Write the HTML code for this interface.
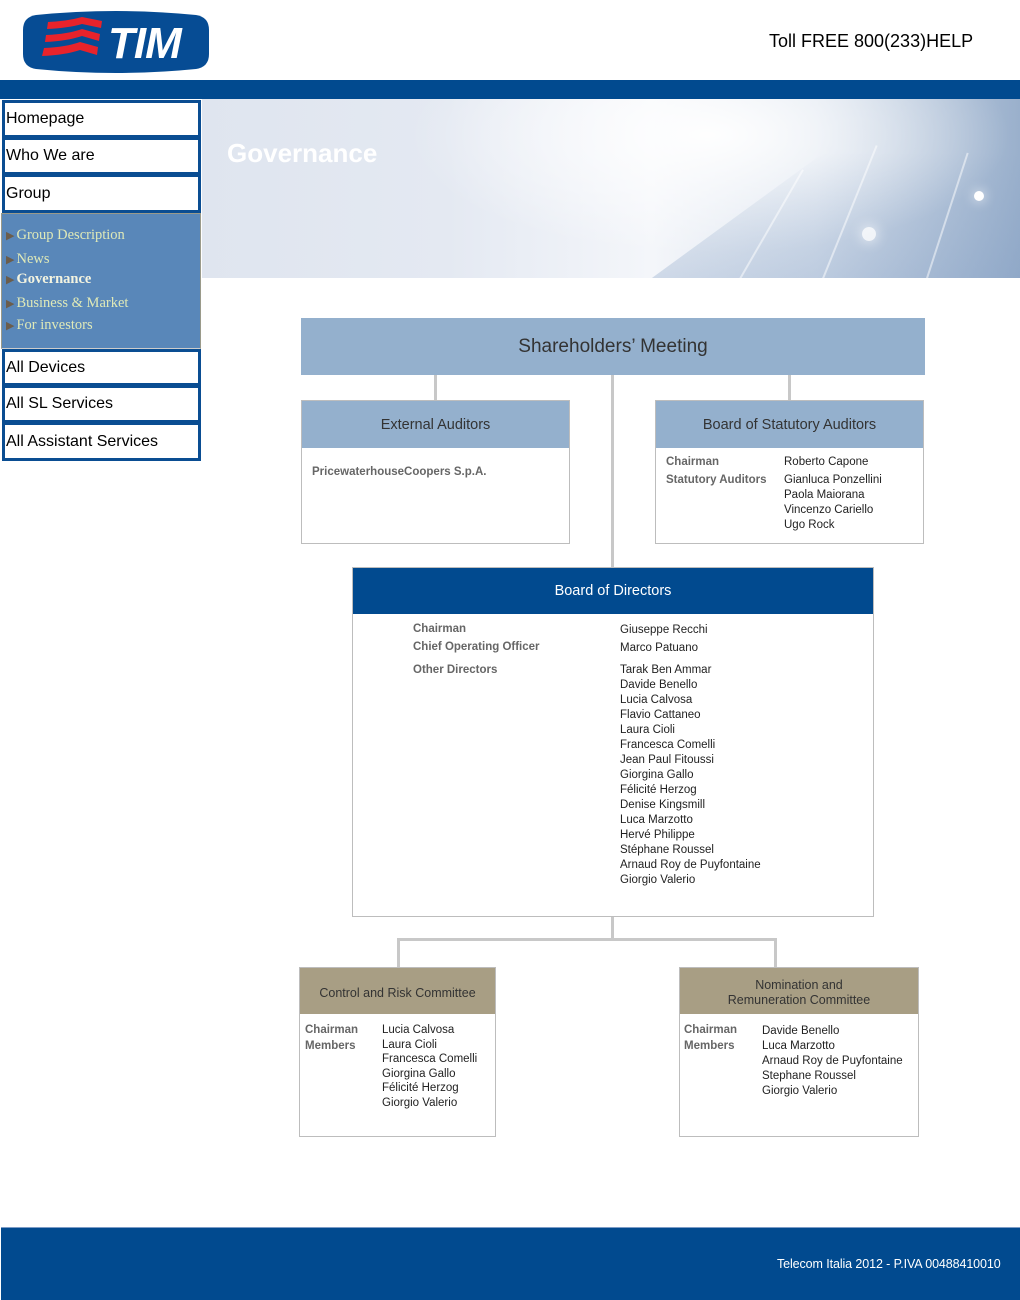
<!DOCTYPE html>
<html><head><meta charset="utf-8"><style>
*{margin:0;padding:0;box-sizing:border-box}
body{width:1020px;height:1300px;position:relative;background:#fff;font-family:"Liberation Sans",Arial,sans-serif;overflow:hidden}
.a{position:absolute}
.btn{position:absolute;left:2px;width:199px;border:3px solid #0a4d92;background:#fff;font-size:16px;color:#000;padding-left:1px;display:flex;align-items:center}
.sub{font-family:"Liberation Serif",serif;font-size:14.5px;color:#dfe9b8;position:absolute;left:6px}
.sub b{color:#6b5d4c;font-size:11px;font-weight:normal;margin-right:2px}
.box{position:absolute;background:#fff;border:1px solid #bdbdbd}
.hd{position:absolute;left:0;right:0;top:0;display:flex;align-items:center;justify-content:center;text-align:center;color:#333;font-size:14.5px}
.ln{position:absolute;background:#c8c8c8}
.lab{position:absolute;color:#666;font-weight:bold;font-size:11.5px;line-height:18px}
.nm{position:absolute;color:#222;font-size:11.5px;line-height:15px}
</style></head><body>
<svg class="a" style="left:22px;top:10px" width="188" height="64" viewBox="0 0 188 64">
<path d="M14 5 Q94 -3 174 5 Q187 7 187 20 L187 44 Q187 57 174 59 Q94 67 14 59 Q1 57 1 44 L1 20 Q1 7 14 5Z" fill="#064c94"/>
<g fill="#e8232b">
<path d="M26 12 Q46 11 60 7 L80 11 L79 18 L60 14 Q46 18 25 19Z"/>
<path d="M24 25 Q46 24 60 19 L78 24 L77 31 L60 26 Q45 31 23 32Z"/>
<path d="M22 38 Q44 37 58 32 L76 37 L75 45 L58 40 Q43 45 20 46Z"/>
</g>
<text x="86" y="48" font-family="Liberation Sans" font-weight="bold" font-style="italic" font-size="44" fill="#fff" letter-spacing="-1">TIM</text>
</svg>
<div class="a" style="left:769px;top:31px;font-size:18px;color:#000">Toll FREE 800(233)HELP</div>
<div class="a" style="left:0;top:80px;width:1020px;height:19px;background:#014a8f"></div>
<div class="a" style="left:202px;top:99px;width:818px;height:179px;overflow:hidden;background:linear-gradient(90deg,#dfe5ef 0%,#e4e9f2 30%,#f4f6fa 55%,#dbe3ee 75%,#9ab0cc 100%)">
<div class="a" style="left:0;top:0;width:818px;height:179px;background:radial-gradient(ellipse 300px 120px at 62% 20%,rgba(255,255,255,.95),rgba(255,255,255,0))"></div>
<div class="a" style="left:0;top:0;width:818px;height:179px;background:linear-gradient(180deg,rgba(255,255,255,0) 30%,rgba(120,150,190,.3) 100%);clip-path:polygon(55% 100%,85% 0,100% 0,100% 100%)"></div>
<div class="a" style="left:560px;top:60px;width:2px;height:160px;background:rgba(255,255,255,.5);transform:rotate(30deg)"></div>
<div class="a" style="left:640px;top:40px;width:2px;height:180px;background:rgba(255,255,255,.5);transform:rotate(22deg)"></div>
<div class="a" style="left:740px;top:50px;width:2px;height:160px;background:rgba(255,255,255,.5);transform:rotate(18deg)"></div>
<div class="a" style="left:772px;top:92px;width:10px;height:10px;border-radius:50%;background:#fff;box-shadow:0 0 12px #fff"></div>
<div class="a" style="left:660px;top:128px;width:14px;height:14px;border-radius:50%;background:rgba(255,255,255,.8);box-shadow:0 0 14px #fff"></div>
<div class="a" style="left:25px;top:39px;font-size:26px;font-weight:bold;color:#fff">Governance</div>
</div>
<div class="btn" style="top:100px;height:38px">Homepage</div>
<div class="btn" style="top:137px;height:38px">Who We are</div>
<div class="btn" style="top:174px;height:39px">Group</div>
<div class="a" style="left:1px;top:213px;width:200px;height:136px;background:#5987b9;border:1px solid #9a9a8a;border-bottom:1px solid #ccc"></div>
<div class="sub" style="top:227px"><b>▶</b>Group Description</div>
<div class="sub" style="top:251px"><b>▶</b>News</div>
<div class="sub" style="top:271px;font-weight:bold;color:#f4f4e0"><b>▶</b>Governance</div>
<div class="sub" style="top:295px"><b>▶</b>Business &amp; Market</div>
<div class="sub" style="top:317px"><b>▶</b>For investors</div>
<div class="btn" style="top:349px;height:37px">All Devices</div>
<div class="btn" style="top:385px;height:38px">All SL Services</div>
<div class="btn" style="top:422px;height:39px">All Assistant Services</div>
<div class="ln" style="left:434px;top:375px;width:3px;height:26px"></div>
<div class="ln" style="left:788px;top:375px;width:3px;height:26px"></div>
<div class="ln" style="left:611px;top:375px;width:3px;height:193px"></div>
<div class="ln" style="left:611px;top:916px;width:3px;height:25px"></div>
<div class="ln" style="left:397px;top:938px;width:380px;height:3px"></div>
<div class="ln" style="left:397px;top:938px;width:3px;height:30px"></div>
<div class="ln" style="left:774px;top:938px;width:3px;height:30px"></div>
<div class="a" style="left:301px;top:318px;width:624px;height:57px;background:#94b0cd;display:flex;align-items:center;justify-content:center;font-size:19px;color:#333">Shareholders’ Meeting</div>
<div class="box" style="left:301px;top:400px;width:269px;height:144px">
<div class="hd" style="height:47px;background:#94b0cd">External Auditors</div>
<div class="lab" style="left:10px;top:62px">PricewaterhouseCoopers S.p.A.</div>
</div>
<div class="box" style="left:655px;top:400px;width:269px;height:144px">
<div class="hd" style="height:47px;background:#94b0cd">Board of Statutory Auditors</div>
<div class="lab" style="left:10px;top:52px">Chairman<br>Statutory Auditors</div>
<div class="nm" style="left:128px;top:54px">Roberto Capone</div>
<div class="nm" style="left:128px;top:72px">Gianluca Ponzellini<br>Paola Maiorana<br>Vincenzo Cariello<br>Ugo Rock</div>
</div>
<div class="box" style="left:352px;top:567px;width:522px;height:350px">
<div class="hd" style="height:46px;background:#014a8f;color:#fff">Board of Directors</div>
<div class="lab" style="left:60px;top:52px">Chairman<br>Chief Operating Officer</div>
<div class="lab" style="left:60px;top:93px">Other Directors</div>
<div class="nm" style="left:267px;top:53px;line-height:18px">Giuseppe Recchi<br>Marco Patuano</div>
<div class="nm" style="left:267px;top:95px">Tarak Ben Ammar<br>Davide Benello<br>Lucia Calvosa<br>Flavio Cattaneo<br>Laura Cioli<br>Francesca Comelli<br>Jean Paul Fitoussi<br>Giorgina Gallo<br>Félicité Herzog<br>Denise Kingsmill<br>Luca Marzotto<br>Hervé Philippe<br>Stéphane Roussel<br>Arnaud Roy de Puyfontaine<br>Giorgio Valerio</div>
</div>
<div class="box" style="left:299px;top:967px;width:197px;height:170px">
<div class="hd" style="height:46px;background:#a89e84;font-size:12.5px;padding-top:4px">Control and Risk Committee</div>
<div class="lab" style="left:5px;top:54px;line-height:16px">Chairman<br>Members</div>
<div class="nm" style="left:82px;top:55px;line-height:14.5px">Lucia Calvosa<br>Laura Cioli<br>Francesca Comelli<br>Giorgina Gallo<br>Félicité Herzog<br>Giorgio Valerio</div>
</div>
<div class="box" style="left:679px;top:967px;width:240px;height:170px">
<div class="hd" style="height:46px;background:#a89e84;font-size:12.5px;line-height:15px;padding-top:3px">Nomination and<br>Remuneration Committee</div>
<div class="lab" style="left:4px;top:54px;line-height:16px">Chairman<br>Members</div>
<div class="nm" style="left:82px;top:56px">Davide Benello<br>Luca Marzotto<br>Arnaud Roy de Puyfontaine<br>Stephane Roussel<br>Giorgio Valerio</div>
</div>
<div class="a" style="left:1px;top:1227px;width:1019px;height:73px;background:#014a8f;border-top:1px solid #7d9cc6"></div>
<div class="a" style="left:777px;top:1257px;font-size:12.5px;letter-spacing:-0.1px;color:#fff">Telecom Italia 2012 - P.IVA 00488410010</div>
</body></html>
